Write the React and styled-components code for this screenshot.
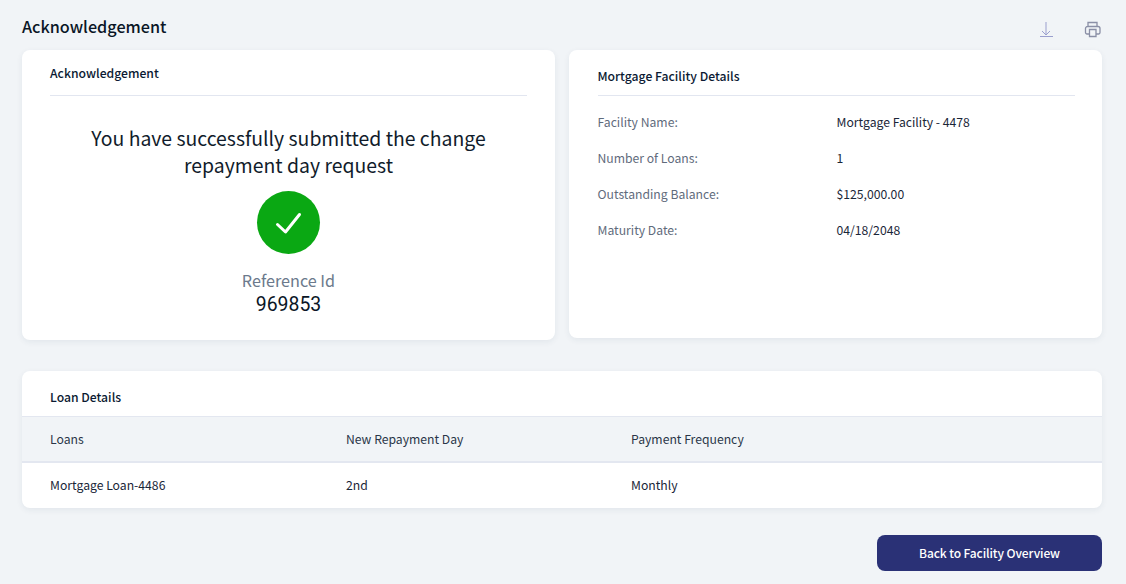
import React from "react";
import styled, { createGlobalStyle } from "styled-components";

const Global = createGlobalStyle`
  html, body { margin: 0; padding: 0; background: #f1f4f7; }
  body { font-family: "Noto Sans CJK SC", "Noto Sans", sans-serif; color: #0b1a33; }
`;
const Page = styled.div`
  width: 1126px; height: 584px; box-sizing: border-box; padding: 0 24px 0 22px; overflow: hidden;
  display: flex; flex-direction: column;
`;
const Header = styled.header`
  height: 50px; display: flex; align-items: flex-start; justify-content: space-between;
`;
const Title = styled.h1`
  margin: 14px 0 0; font-size: 16.2px; line-height: 24px; font-weight: 500; color: #0a1626;
`;
const Tools = styled.div`
  display: flex; gap: 26px; margin: 20px 0 0 0;
`;
const ToolBtn = styled.span`
  display: block; width: 20px; height: 20px; color: ${p => p.$c};
`;
const Cards = styled.div`
  display: grid; grid-template-columns: 533px 533px; gap: 14px; align-items: start;
`;
const Card = styled.section`
  background: #fff; border-radius: 8px; box-shadow: 0 2px 6px rgba(30, 50, 90, 0.07);
  box-sizing: border-box; height: ${p => p.$h}px; padding: 0 ${p => p.$pr}px 0 ${p => p.$pl}px;
`;
const CardHead = styled.h2`
  margin: 0; height: ${p => p.$h}px; box-sizing: border-box; padding-top: ${p => p.$pt}px;
  font-size: 12.2px; line-height: 18px; font-weight: 500; color: #0b1a33;
  border-bottom: 1px solid #e2e6f0;
`;
const Message = styled.p`
  margin: 28px 0 0; font-size: 19.4px; line-height: 27px; text-align: center; color: #111c2b;
`;
const Check = styled.div`
  width: 63px; height: 63px; margin: 13px auto 0; border-radius: 50%; background: #0aa813;
  display: flex; align-items: center; justify-content: center;
`;
const RefLabel = styled.div`
  margin-top: 15px; font-size: 16.2px; line-height: 23px; text-align: center; color: #6c7a8c;
`;
const RefValue = styled.div`
  margin-top: 1px; font-family: "Roboto", sans-serif; font-size: 19.4px; line-height: 23px; text-align: center; color: #0a1626;
`;
const Facts = styled.dl`
  margin: 8px 0 0; display: grid; grid-template-columns: 239px 1fr; grid-auto-rows: 36px;
  align-items: center; font-size: 12.2px; line-height: 18px;
`;
const Term = styled.dt` color: #5f6b7c; `;
const Desc = styled.dd` margin: 0; color: #1a2638; `;
const LoanCard = styled.section`
  margin-top: 31px; background: #fff; border-radius: 8px; height: 137px;
  box-shadow: 0 2px 6px rgba(30, 50, 90, 0.07); overflow: hidden;
`;
const LoanHead = styled.h2`
  margin: 0; height: 45px; box-sizing: border-box; padding: 17px 28px 0;
  font-size: 12.2px; line-height: 18px; font-weight: 500; color: #0b1a33;
`;
const Row = styled.div`
  display: grid; grid-template-columns: 296px 285px 1fr; align-items: center; padding: 0 28px;
  font-size: 12.2px; line-height: 18px; color: #1a2638;
  height: ${p => p.$h}px; box-sizing: border-box;
  ${p => p.$head
    ? `background: #f1f4f7; color: #2a3648; border-top: 1px solid #e3e7f0; border-bottom: 2px solid #e3e7f0;`
    : `padding-bottom: 2px;`}
`;
const Footer = styled.div`
  margin-top: 27px; display: flex; justify-content: flex-end;
`;
const Button = styled.button`
  width: 225px; height: 36px; border: 0; border-radius: 8px; background: #2a3176; color: #fff;
  font-family: inherit; font-size: 12px; font-weight: 500; padding: 0 0 2px; letter-spacing: -0.1px;
`;

export default function App() {
  return (
    <Page>
      <Global />
      <Header>
        <Title>Acknowledgement</Title>
        <Tools>
          <ToolBtn $c="#9a9fce">
            <svg width="20" height="20" viewBox="0 0 20 20" fill="none" stroke="currentColor" strokeWidth="1">
              <path d="M10 2v13M6 11l4 4 4-4M4 16.500h13" />
            </svg>
          </ToolBtn>
          <ToolBtn $c="#8a8fa6">
            <svg width="20" height="20" viewBox="0 0 20 20" fill="none" stroke="currentColor" strokeWidth="1.3">
              <path d="M6 6.500V2.500h9v4M7 14H5a1.500 1.500 0 0 1-1.500-1.500V8.500a2 2 0 0 1 2-2h10.500a2 2 0 0 1 2 2v4a1.500 1.500 0 0 1-1.500 1.500h-2.500" />
              <path d="M7.500 9.500h6.500v7H7.500z" />
            </svg>
          </ToolBtn>
        </Tools>
      </Header>
      <Cards>
        <Card $h={290} $pl={28} $pr={28}>
          <CardHead $h={46} $pt={14}>Acknowledgement</CardHead>
          <Message>You have successfully submitted the change<br />repayment day request</Message>
          <Check>
            <svg width="30" height="30" viewBox="0 0 30 30" fill="none" stroke="#fff" strokeWidth="3" strokeLinecap="round" strokeLinejoin="round">
              <path d="M3.500 16.500 11.500 24 25.500 6.500" />
            </svg>
          </Check>
          <RefLabel>Reference Id</RefLabel>
          <RefValue>969853</RefValue>
        </Card>
        <Card $h={288} $pl={28.5} $pr={27}>
          <CardHead $h={46} $pt={17}>Mortgage Facility Details</CardHead>
          <Facts>
            <Term>Facility Name:</Term><Desc>Mortgage Facility - 4478</Desc>
            <Term>Number of Loans:</Term><Desc>1</Desc>
            <Term>Outstanding Balance:</Term><Desc>$125,000.00</Desc>
            <Term>Maturity Date:</Term><Desc>04/18/2048</Desc>
          </Facts>
        </Card>
      </Cards>
      <LoanCard>
        <LoanHead>Loan Details</LoanHead>
        <Row $head $h={47}>
          <span>Loans</span><span>New Repayment Day</span><span>Payment Frequency</span>
        </Row>
        <Row $h={45}>
          <span>Mortgage Loan-4486</span><span>2nd</span><span>Monthly</span>
        </Row>
      </LoanCard>
      <Footer>
        <Button>Back to Facility Overview</Button>
      </Footer>
    </Page>
  );
}
